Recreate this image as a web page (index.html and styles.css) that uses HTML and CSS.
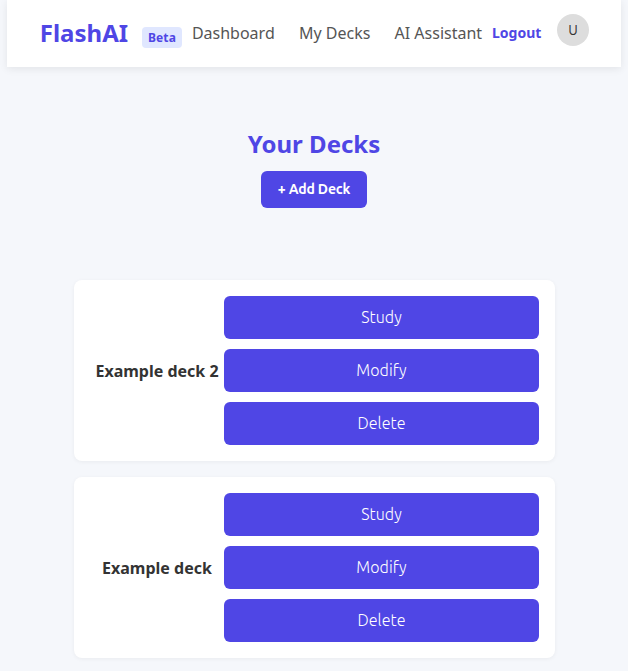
FILE: index.html
```html
<!DOCTYPE html>
<html lang="en">
<head>
<meta charset="utf-8">
<title>FlashAI</title>
<link rel="stylesheet" href="styles.css">
</head>
<body>
<header class="navbar">
  <div class="brand"><span class="logo">FlashAI</span><span class="badge">Beta</span></div>
  <nav class="links"><a>Dashboard</a><a>My Decks</a><a>AI Assistant</a></nav>
  <a class="logout">Logout</a>
  <div class="avatar">U</div>
</header>
<main>
  <section class="heading">
    <h1>Your Decks</h1>
    <button class="add">+ Add Deck</button>
  </section>
  <section class="decks">
    <article class="deck">
      <h2>Example deck 2</h2>
      <div class="actions"><button>Study</button><button>Modify</button><button>Delete</button></div>
    </article>
    <article class="deck">
      <h2>Example deck</h2>
      <div class="actions"><button>Study</button><button>Modify</button><button>Delete</button></div>
    </article>
  </section>
</main>
</body>
</html>
```
FILE: styles.css
```css
* { box-sizing: border-box; }
body {
  margin: 0;
  height: 671px;
  overflow: hidden;
  background: #f5f7fb;
  color: #333;
  font-family: "Noto Sans", sans-serif;
}
.navbar {
  display: flex;
  height: 67px;
  margin: 0 7px;
  padding-left: 32.8px;
  background: #fff;
  box-shadow: 0 2px 8px rgba(0, 0, 0, 0.08);
  white-space: nowrap;
}
.brand { display: flex; width: 152.1px; }
.logo { width: 102.2px; margin-top: 16px; font-size: 24px; line-height: 33px; font-weight: 700; color: #4f46e5; }
.badge { width: 40px; height: 21px; margin-top: 27px; border-radius: 4px; background: #e0e7ff; color: #4f46e5; font-size: 12px; line-height: 21px; font-weight: 700; text-align: center; letter-spacing: 0.15px; }
.links { display: flex; gap: 24.2px; width: 300.1px; margin-top: 22px; color: #555; font-size: 16px; line-height: 22px; }
.logout { width: 65px; margin-top: 23px; color: #4f46e5; font-size: 14px; line-height: 20px; font-weight: 700; }
.avatar { width: 32px; height: 32px; margin-top: 14px; border-radius: 50%; background: #ddd; color: #333; font-family: Ubuntu, "Noto Sans", sans-serif; font-size: 14px; line-height: 32px; text-align: center; }
.heading { display: flex; flex-direction: column; align-items: center; padding-top: 60px; }
h1 { margin: 0; color: #4f46e5; font-size: 24px; line-height: 33px; font-weight: 700; }
button { border: 0; border-radius: 6px; padding: 0; background: #4f46e5; color: #fff; }
.add { width: 106px; height: 37px; margin-top: 11px; padding-bottom: 1px; font: 600 14px/36px Ubuntu, "Noto Sans", sans-serif; letter-spacing: -0.15px; }
.decks { display: grid; gap: 16px; width: 481px; margin: 72px 0 0 74px; }
.deck { display: flex; align-items: center; height: 181px; padding: 0 16px 0 21px; border-radius: 8px; background: #fff; box-shadow: 0 1px 4px rgba(0, 0, 0, 0.05); }
h2 { width: 124px; margin: 0 5px 0 0; font-size: 16px; line-height: 22px; font-weight: 700; text-align: center; white-space: nowrap; }
.actions { display: grid; gap: 10px; flex: 1; }
.actions button { height: 43px; font: 330 16px/43px Ubuntu, "Noto Sans", sans-serif; letter-spacing: 0.05px; }
```
